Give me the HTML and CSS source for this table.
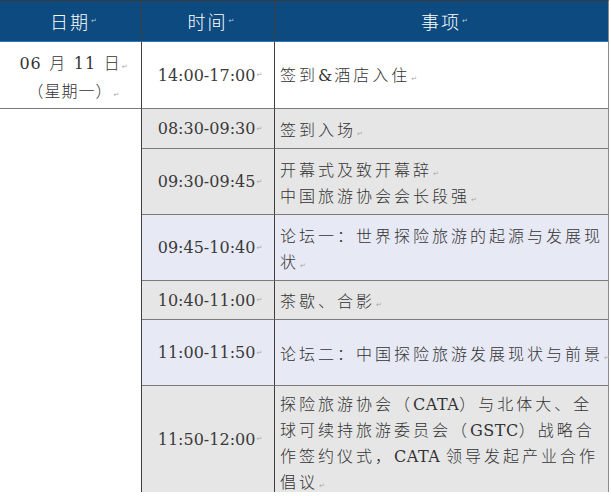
FILE: index.html
```html
<!DOCTYPE html>
<html lang="zh-CN">
<head>
<meta charset="utf-8">
<title>日程</title>
<link rel="stylesheet" href="styles.css">
</head>
<body>
<div class="page">
  <div class="table">
    <div class="cell head c1">日期<span class="pm">↵</span></div>
    <div class="cell head c2">时间<span class="pm">↵</span></div>
    <div class="cell head c3">事项<span class="pm">↵</span></div>

    <div class="cell white c1 date">
      <div class="cn wide"><span class="lat">06</span> 月 <span class="lat">11</span> 日<span class="pm">↵</span></div>
      <div class="cn">（星期一）<span class="pm">↵</span></div>
    </div>
    <div class="cell white c2 time">14:00-17:00<span class="pm">↵</span></div>
    <div class="cell white c3 item"><div class="txt">签到<span class="amp">&amp;</span>酒店入住<span class="pm">↵</span></div></div>

    <div class="cell merged c1">
      <div class="cn wide next"><span class="lat">06</span> 月 <span class="lat">12</span> 日</div>
    </div>

    <div class="cell gray c2 time rt">08:30-09:30<span class="pm">↵</span></div>
    <div class="cell gray c3 item rt"><div class="txt">签到入场<span class="pm">↵</span></div></div>

    <div class="cell gray c2 time rt">09:30-09:45<span class="pm">↵</span></div>
    <div class="cell gray c3 item rt"><div class="txt">开幕式及致开幕辞<span class="pm">↵</span><br>中国旅游协会会长段强<span class="pm">↵</span></div></div>

    <div class="cell blue c2 time rt">09:45-10:40<span class="pm">↵</span></div>
    <div class="cell blue c3 item rt"><div class="txt">论坛一：世界探险旅游的起源与发展现<br>状<span class="pm">↵</span></div></div>

    <div class="cell gray c2 time rt">10:40-11:00<span class="pm">↵</span></div>
    <div class="cell gray c3 item rt"><div class="txt">茶歇、合影<span class="pm">↵</span></div></div>

    <div class="cell blue c2 time rt">11:00-11:50<span class="pm">↵</span></div>
    <div class="cell blue c3 item rt"><div class="txt">论坛二：中国探险旅游发展现状与前景<span class="pm">↵</span></div></div>

    <div class="cell gray c2 time rt">11:50-12:00<span class="pm">↵</span></div>
    <div class="cell gray c3 item rt last"><div class="txt lh24">探险旅游协会（<span class="lat">CATA</span>）与北体大、全<br>球可续持旅游委员会（<span class="lat">GSTC</span>）战略合<br>作签约仪式，<span class="lat">CATA </span>领导发起产业合作<br>倡议<span class="pm">↵</span></div></div>
  </div>
</div>
</body>
</html>
```

FILE: styles.css
```css
html, body {
  margin: 0;
  padding: 0;
  background: #ffffff;
}

.page {
  width: 611px;
  height: 496px;
  overflow: hidden;
  background: #ffffff;
}

.table {
  display: grid;
  grid-template-columns: 142px 133px 334px;
  grid-template-rows: 42px 66px 40px 66px 66px 39px 66px 107px;
  width: 609px;
  height: 492px;
  overflow: hidden;
  font-family: "DejaVu Serif", "Noto Sans CJK SC", serif;
  font-size: 16px;
  color: #333333;
}

.cell {
  box-sizing: border-box;
  display: flex;
  align-items: center;
  min-width: 0;
}

.c1, .c2 {
  border-right: 1px solid #3f3f3f;
}

.c3 {
  border-right: 1px solid #8a8a8a;
}

.head {
  background: #0c4a80;
  color: #ffffff;
  border-top: 1px solid #3a3a3a;
  border-bottom: 1px solid #2f78bf;
  justify-content: center;
  font-family: "Noto Sans CJK SC", sans-serif;
  font-weight: 300;
  font-size: 18px;
  letter-spacing: 2px;
  padding-left: 6px;
}

.head .pm {
  color: #b9c6d6;
}

.white {
  background: #ffffff;
}

.gray {
  background: #e6e6e6;
}

.blue {
  background: #e7e9f5;
}

.rt {
  border-top: 1px solid #7a7a7a;
}

.date {
  flex-direction: column;
  justify-content: center;
  align-items: center;
  line-height: 26px;
  padding-top: 2px;
  padding-left: 6px;
}

.cn {
  font-family: "Noto Sans CJK SC", sans-serif;
  font-weight: 300;
  letter-spacing: 1px;
  white-space: nowrap;
}

.wide {
  word-spacing: 3px;
}

.lat {
  font-family: "DejaVu Serif", serif;
  font-weight: 400;
  letter-spacing: 0;
}

.wide .lat {
  letter-spacing: 1px;
}

.time {
  justify-content: center;
  font-family: "DejaVu Serif", serif;
  white-space: nowrap;
  padding-left: 4px;
  color: #3a3a3a;
}

.item {
  justify-content: flex-start;
  padding-left: 5px;
}

.last {
  padding-top: 5px;
}

.txt {
  font-family: "Noto Sans CJK SC", sans-serif;
  font-weight: 300;
  letter-spacing: 3px;
  white-space: nowrap;
  line-height: 26px;
}

.lh24 { line-height: 24px; }

.txt .lat {
  letter-spacing: 0.5px;
}

.amp {
  font-family: "DejaVu Serif", serif;
  font-weight: 400;
  letter-spacing: 2px;
}

.merged {
  grid-column: 1;
  grid-row: 3 / 9;
  background: #ffffff;
  border-top: 1px solid #7a7a7a;
  flex-direction: column;
  justify-content: flex-end;
  align-items: center;
  overflow: hidden;
  padding-left: 6px;
}

.next {
  line-height: 26px;
  margin-bottom: -21px;
  color: #555555;
}

.pm {
  font-family: "DejaVu Sans", sans-serif;
  font-size: 7px;
  line-height: 0;
  color: #a8a8a8;
  letter-spacing: 0;
  word-spacing: 0;
  margin-left: 1px;
  vertical-align: baseline;
  font-weight: 400;
}
```
